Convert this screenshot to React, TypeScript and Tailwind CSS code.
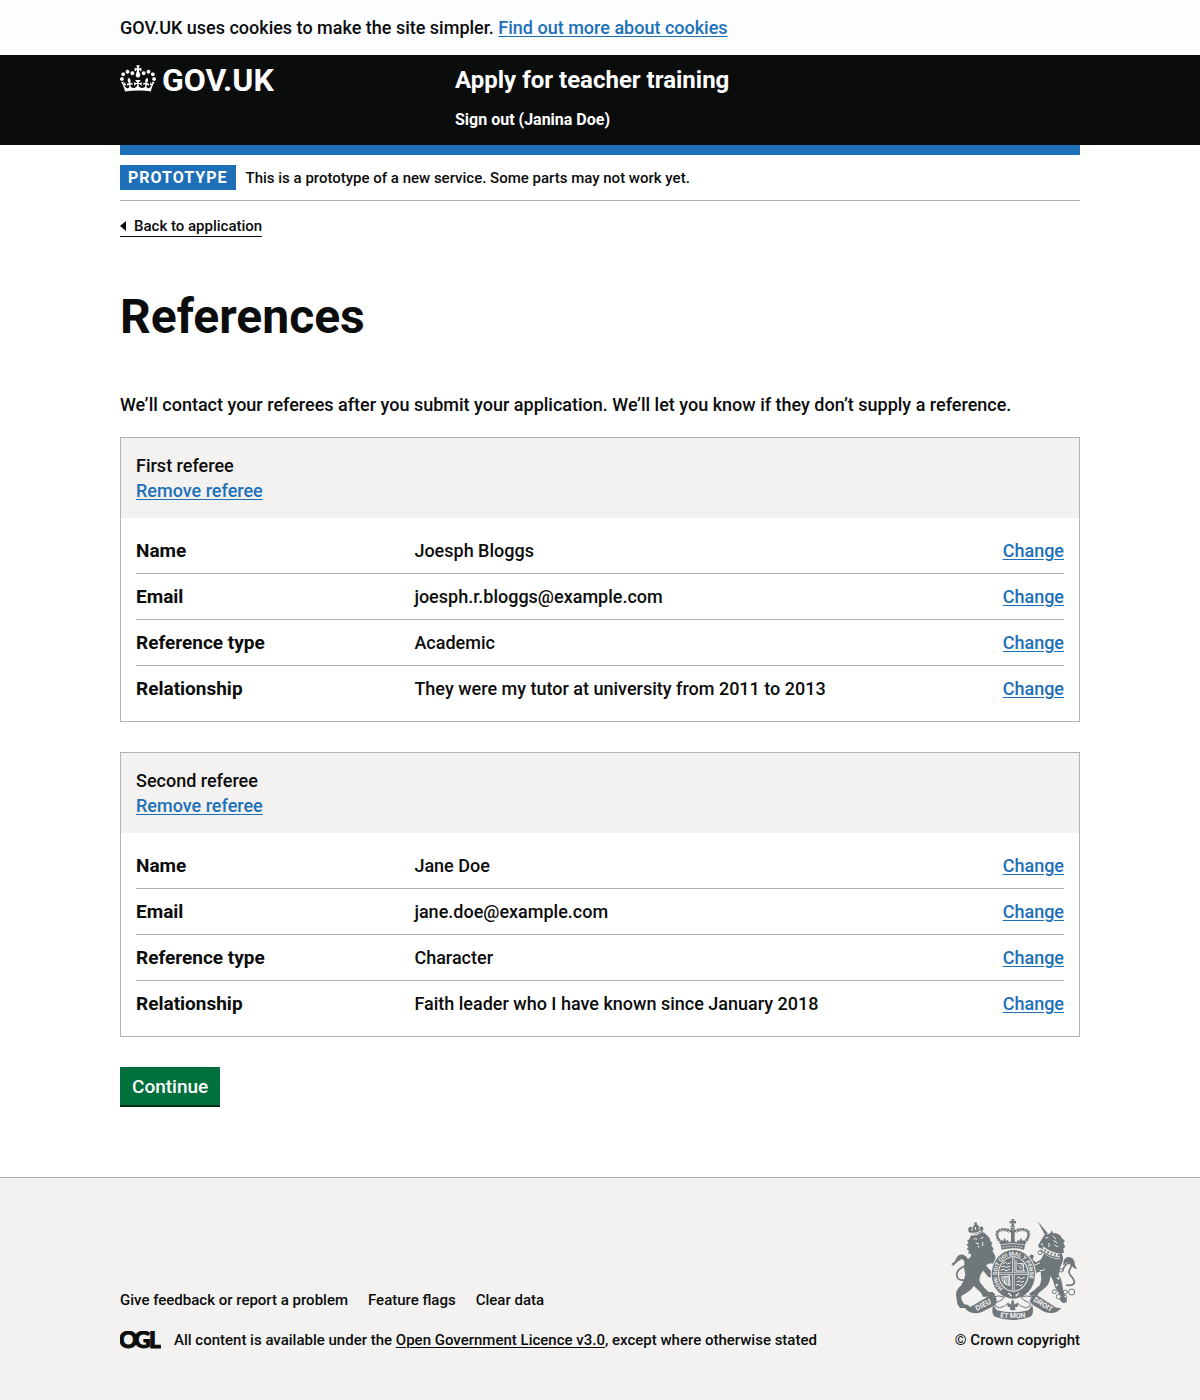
import type { ReactNode } from "react";

const INK = "#6f777b";
const PAPER = "#f3f2f1";

const linkClass = "text-[#1d70b8] underline underline-offset-2 hover:text-[#003078]";

function Container({ children }: { children: ReactNode }) {
  return <div className="mx-auto w-full max-w-[1020px] px-[30px]">{children}</div>;
}

function Crown() {
  return (
    <svg aria-hidden="true" viewBox="0 0 132 97" className="h-[27px] w-9 shrink-0 fill-current">
      <path d="M25 30.2c3.5 1.5 7.7-.2 9.1-3.7 1.5-3.6-.2-7.8-3.9-9.2-3.6-1.4-7.6.3-9.1 3.9-1.4 3.5.3 7.5 3.9 9zM9 39.5c3.6 1.5 7.8-.2 9.2-3.7 1.5-3.6-.2-7.8-3.9-9.1-3.6-1.5-7.6.2-9.1 3.8-1.4 3.5.3 7.5 3.8 9zM4.4 57.2c3.5 1.5 7.7-.2 9.1-3.8 1.5-3.6-.2-7.7-3.9-9.1-3.5-1.5-7.6.3-9.1 3.8-1.4 3.5.3 7.6 3.9 9.1zm38.3-21.4c3.5 1.5 7.7-.2 9.1-3.8 1.5-3.6-.2-7.7-3.9-9.1-3.6-1.5-7.6.3-9.1 3.8-1.3 3.6.4 7.7 3.9 9.1zm64.4-5.6c-3.6 1.5-7.8-.2-9.1-3.7-1.5-3.6.2-7.8 3.8-9.2 3.6-1.4 7.7.3 9.2 3.9 1.3 3.5-.4 7.5-3.9 9zm15.9 9.3c-3.6 1.5-7.7-.2-9.1-3.7-1.5-3.6.2-7.8 3.7-9.1 3.6-1.5 7.7.2 9.2 3.8 1.5 3.5-.3 7.5-3.8 9zm4.7 17.7c-3.6 1.5-7.8-.2-9.2-3.8-1.5-3.6.2-7.7 3.9-9.1 3.6-1.5 7.7.3 9.2 3.8 1.3 3.5-.4 7.6-3.9 9.1zM89.3 35.8c-3.6 1.5-7.8-.2-9.2-3.8-1.4-3.6.2-7.7 3.9-9.1 3.6-1.5 7.7.3 9.2 3.8 1.4 3.6-.3 7.7-3.9 9.1zM69.7 17.7l8.9 4.7V9.3l-8.9 2.8c-.2-.3-.5-.6-.9-.9L72.4 0H59.6l3.5 11.2c-.3.3-.6.5-.9.9l-8.8-2.8v13.1l8.8-4.7c.3.3.6.7.9.9l-5 15.4v.1c-.2.8-.4 1.6-.4 2.4 0 4.1 3.1 7.5 7 8.1h.2c.3 0 .7.1 1 .1.4 0 .7 0 1-.1h.2c4-.6 7.1-4.1 7.1-8.1 0-.8-.1-1.7-.4-2.4V34l-5.1-15.4c.4-.2.7-.6 1-.9zM66 92.8c16.9 0 32.8 1.1 47.1 3.2 4-16.9 8.9-26.7 14-33.5l-9.6-3.4c1 4.9 1.1 7.2 0 10.2-1.5-1.4-3-4.3-4.2-8.7L108.6 76c2.8-2 5-3.2 7.5-3.3-4.4 9.4-10 11.9-13.6 11.2-4.3-.8-6.3-4.6-5.6-7.9 1-4.7 5.7-5.9 8-.5 4.3-8.7-3-11.4-7.6-8.8 7.1-7.2 7.9-13.5 2.1-21.1-8 6.1-8.1 12.3-4.5 20.8-4.7-5.4-12.1-2.5-9.5 6.2 3.4-5.2 7.9-2 7.2 3.1-.6 4.3-6.4 7.8-13.5 7.2-10.3-.9-10.9-8-11.2-13.8 2.5-.5 7.1 1.8 11 7.3L80.2 60c-4.1 4.4-8 5.3-12.3 5.4 1.4-4.4 8-11.6 8-11.6H55.5s6.4 7.2 7.9 11.6c-4.2-.1-8-1-12.3-5.4l1.4 16.4c3.9-5.5 8.5-7.7 10.9-7.3-.3 5.8-.9 12.8-11.1 13.8-7.2.6-12.9-2.9-13.5-7.2-.7-5 3.8-8.3 7.1-3.1 2.7-8.7-4.6-11.6-9.4-6.2 3.7-8.5 3.6-14.7-4.6-20.8-5.8 7.6-5 13.9 2.2 21.1-4.7-2.6-11.9.1-7.7 8.8 2.3-5.5 7.1-4.2 8.1.5.7 3.3-1.3 7.1-5.7 7.9-3.5.7-9-1.8-13.5-11.2 2.5.1 4.7 1.3 7.5 3.3l-4.7-15.4c-1.2 4.4-2.7 7.2-4.3 8.7-1.1-3-.9-5.3 0-10.2l-9.5 3.4c5 6.9 9.9 16.7 14 33.5 14.8-2.1 30.8-3.2 47.7-3.2z" />
    </svg>
  );
}

function LicenceLogo() {
  return (
    <svg aria-hidden="true" viewBox="0 0 41 18" className="h-[18px] w-[41px] shrink-0 fill-current" fontFamily="Lato, sans-serif" fontWeight="900" fontSize="23" stroke="currentColor" strokeWidth="1">
      <text x="-1" y="17">O</text>
      <text x="14" y="17">G</text>
      <text x="29" y="17">L</text>
    </svg>
  );
}

function RoyalArms() {
  return (
    <svg aria-hidden="true" viewBox="0 0 393 312" className="h-[104px] w-[131px]" fill={INK} fontFamily="Roboto, sans-serif" fontWeight="700">
      {/* Lion */}
      <path d="M59 41q-4-10 3-14q8-2 9 6q1-12 10-14q9 0 9 12q4-8 11-4q5 6-1 14l-20 8q-12 0-21-8z" />
      <circle cx="80" cy="17" r="4" />
      <path d="M64 46q18 2 34-8" stroke={PAPER} strokeWidth="3" fill="none" />
      <path d="M68 33l2 4M79 27l1 8M91 31l-1 4" stroke={PAPER} strokeWidth="4" fill="none" />
      <path d="M66 52q18 2 34-10q8 2 14 10q8 6 10 16l6 8-3 6 7 12-4 4 8 14 3 16-4 10-14-2-12 6q10 14 22 22l6 10-8 6-14-4-14-18q-8 8-10 18q-4 12 2 20q10 14 24 26l12 0 8 8-4 6-34 0q-2-12-14-20l-12-12q-10 14-22 20l-16 10 0 10 8 14 14 4 4 8-30 0-8-12-4-28q0-16 14-26q10-14 14-34l-4-20q0-16 12-26l10-10-4-8-6 2 3-10-7-4 6-8-7-6 7-5-5-7 7-4z" />
      <path d="M74 64q6-4 10 0M95 61l8-3M80 75l10 3M87 83l2 6M100 72q4 6 0 12" stroke={PAPER} strokeWidth="3" fill="none" />
      <path d="M50 186q-28 3-27-17q2-14 18-22q18-10 13-24q-12-14-28 0q-8 14-18 16" stroke={INK} strokeWidth="5" fill="none" />
      <path d="M10 146q5-10 11-22q4-16 22-14q16 6 11 20q-4 8-8 10q2-16-10-16q-14 8-26 22z" />

      {/* Imperial crown */}
      <path d="M187 3h9l-2 7 7-2v9l-7-2 2 8h-9l2-8-7 2v-9l7 2z" />
      <circle cx="191" cy="29" r="7" />
      <path d="M184 28h15" stroke={PAPER} strokeWidth="2" />
      <path d="M155 73q-16-18-10-32q14-14 40-2M228 73q16-18 10-32q-14-14-40-2" stroke={INK} strokeWidth="8" strokeLinecap="round" strokeDasharray="0.1 8.5" fill="none" />
      <path d="M157 71q-14-16-9-28q12-10 34 0M226 71q14-16 9-28q-12-10-34 0" stroke={INK} strokeWidth="2" fill="none" />
      <path d="M186 37h11v38h-11z" />
      <path d="M154 77l3-12 6 4 3-10 6 10 5-4 2 8 6-2 6-16 7 16 6 2 2-8 5 4 5-10 4 10 6-4 3 12-4 18q-34-9-67 0z" />
      <path d="M156 80q35-7 71 0" stroke={PAPER} strokeWidth="2" fill="none" />
      <path d="M161 88q31-6 61 0" stroke={PAPER} strokeWidth="3" fill="none" strokeDasharray="5 4" />

      {/* Unicorn */}
      <path d="M266 10l30 36-7 7z" />
      <path d="M286 52l18-6 4-9 4 8q20 0 26 14l10 10-5 6 6 12-6 4 2 14-8 0q8 12 4 26l-8 18q-2 10-4 22q8 12 10 24l4 24q4 12 10 20l0 14-12 2-8-8-2-18-12-20-8-24-8-12q2 20-12 34l-22 18-4 8-22 0-2-6 14-10 18-16 4-18-2-22-10 2-12 12-8-8 8-12 0-10-12-8-6-18 12-10 8 4-4 12 10 8 14-8 8-14 6-22-10 2-8-2-4-6 8-14z" />
      <path d="M276 92q28 20 56 24" stroke={PAPER} strokeWidth="17" fill="none" />
      <path d="M277 88q24 22 56 24" stroke={INK} strokeWidth="6" strokeDasharray="6 5" fill="none" />
      <path d="M274 96q24 20 56 24" stroke={INK} strokeWidth="4" fill="none" />
      <path d="M289 61q4-4 9-2M311 53l10 10M313 67l12 8M317 81l10 6M275 78l8 1M299 75q4 6 0 12" stroke={PAPER} strokeWidth="3" fill="none" />
      <path d="M257 142l16-8M272 158q10 2 16-6" stroke={PAPER} strokeWidth="3" fill="none" />
      <path d="M341 160q4-20 18-25q12 2 6 14q-10 14 0 24q14 14 10 24q-8 8-24 4" stroke={INK} strokeWidth="5" fill="none" />
      <path d="M343 143q-2-22 14-26q20 0 20 20q2 8 7 16q-14-2-18-14q-8-14-23 4z" />
      <g fill={PAPER} stroke={INK} strokeWidth="3">
        <circle cx="273" cy="104" r="6" />
        <circle cx="336" cy="157" r="5" />
        <circle cx="328" cy="181" r="5" />
        <circle cx="323" cy="201" r="5" />
        <circle cx="316" cy="221" r="6" />
        <circle cx="329" cy="236" r="7" />
        <circle cx="349" cy="222" r="6" />
        <circle cx="349" cy="236" r="4" />
        <circle cx="368" cy="222" r="9" />
      </g>

      {/* Garter and shield */}
      <ellipse cx="193" cy="169" rx="68" ry="76" fill={PAPER} />
      <ellipse cx="193" cy="169" rx="65" ry="73" />
      <ellipse cx="193" cy="168" rx="46" ry="53" fill={PAPER} />
      <ellipse cx="193" cy="168" rx="43" ry="50" />
      <path id="garter-line" d="M162 212A49 56 0 1 1 224 212" fill="none" />
      <text fontSize="17" fill={PAPER}>
        <textPath href="#garter-line">HONI SOIT QUI MAL Y PENSE</textPath>
      </text>
      <path d="M193 119v98M150 167h86" stroke={PAPER} strokeWidth="7" />
      <path d="M193 119v98M150 167h86" stroke={INK} strokeWidth="3" />
      <g stroke={PAPER} strokeWidth="3" fill="none">
        <path d="M163 137l6-4 6 5 10-4M157 147l8-3 6 4 12-3M155 157l8-3 8 4 12-4" />
        <path d="M201 127v32h28M205 137h18v20M209 143l8 10M217 139l6 8" />
        <path d="M157 177q18 0 24-4l2 30q-16-4-20-10zM165 177l2 20M171 176v24M177 175l1 26" />
        <path d="M203 181l6-4 6 5 12-4M203 192l8-3 6 4 8-3M201 202l6-3 6 4 8-4" />
      </g>
      <path d="M178 225l10 10M210 225l-10 10" stroke={PAPER} strokeWidth="4" />

      {/* Motto scroll */}
      <path d="M128 238q22-8 38-1q-4 10-22 16q-8 4-6 11l14 6q16-4 26-16M254 238q-22-8-38-1q4 10 22 16q8 4 6 11l-14 6q-16-4-26-16" fill={PAPER} stroke={INK} strokeWidth="3" />
      <path d="M45 266q14 6 28-4l52-31 14 4 5 14q-4 12-16 18l-28 14q-36 14-55-15z" />
      <path d="M337 269q-14 4-24-6l-50-32-14 4-7 14q4 10 16 16l28 16q34 12 51-12z" />
      <path d="M132 262l12 15q47 12 94 0l12-15q6 26-6 34q-54 20-106 0q-12-8-6-34z" />
      <text fontSize="23" fill={PAPER} textAnchor="middle" transform="translate(106 267) rotate(-28)">DIEU</text>
      <text fontSize="22" fill={PAPER} textAnchor="middle" transform="translate(279 266) rotate(32)">DROIT</text>
      <path id="scroll-line" d="M138 295q54 12 107 0" fill="none" />
      <text fontSize="21" fill={PAPER} textAnchor="middle">
        <textPath href="#scroll-line" startOffset="50%">ET MON</textPath>
      </text>
      <path d="M191 244q8 10 2 20q4-9 11-8q6 3 1 11h-7q2 8 0 10h-14q-2-4 0-10h-7q-5-8 1-11q7-1 11 8q-6-10 2-20z" />
    </svg>
  );
}

type Row = { label: string; value: string };

function RefereeCard({ title, rows }: { title: string; rows: Row[] }) {
  return (
    <section className="mb-[30px] border border-[#b1b4b6]">
      <header className="bg-[#f3f2f1] p-[15px]">
        <h2>{title}</h2>
        <a href="#remove" className={linkClass}>Remove referee</a>
      </header>
      <dl className="px-[15px] py-2.5">
        {rows.map((row) => (
          <div key={row.label} className="flex border-b border-[#b1b4b6] py-2.5 last:border-b-0">
            <dt className="w-[30%] shrink-0 text-[19px] font-bold">{row.label}</dt>
            <dd className="flex-1">{row.value}</dd>
            <dd>
              <a href="#change" aria-label={`Change ${row.label.toLowerCase()}`} className={linkClass}>Change</a>
            </dd>
          </div>
        ))}
      </dl>
    </section>
  );
}

export default function App() {
  return (
    <div className="bg-white font-['Roboto','Liberation_Sans',sans-serif] text-lg leading-[25px] font-medium text-[#0b0c0c]">
      <div className="bg-[#fcfdfe] py-[15px]">
        <Container>
          <p>
            GOV.UK uses cookies to make the site simpler.{" "}
            <a href="#cookies" className={linkClass}>Find out more about cookies</a>
          </p>
        </Container>
      </div>

      <header className="bg-[#0b0c0c] text-white">
        <Container>
          <div className="flex pt-2.5 pb-[15px]">
            <a href="#home" className="flex w-[335px] shrink-0 gap-1.5 text-[32px] leading-[30px] font-bold">
              <Crown />
              <span>GOV.UK</span>
            </a>
            <div>
              <a href="#service" className="block text-2xl leading-[30px] font-bold">Apply for teacher training</a>
              <nav className="mt-[15px] text-base leading-5 font-bold">
                <a href="#sign-out" className="block">Sign out (Janina Doe)</a>
              </nav>
            </div>
          </div>
        </Container>
      </header>

      <Container>
        <div className="h-2.5 bg-[#1d70b8]" />
        <div className="flex items-center gap-2.5 border-b border-[#b1b4b6] py-2.5">
          <strong className="bg-[#1d70b8] px-2 text-base leading-[25px] font-bold tracking-[1px] text-white uppercase">Prototype</strong>
          <span className="text-[15px] leading-5">This is a prototype of a new service. Some parts may not work yet.</span>
        </div>
        <a href="#application" className="mt-[15px] inline-flex items-center gap-2 border-b border-[#0b0c0c] text-[15px] leading-5">
          <svg aria-hidden="true" viewBox="0 0 6 10" className="h-2.5 w-1.5 fill-current">
            <path d="M6 0v10L0 5z" />
          </svg>
          Back to application
        </a>

        <main className="pt-[55px] pb-[70px]">
          <h1 className="mb-[50px] text-5xl leading-[50px] font-bold">References</h1>
          <p className="mb-5">We’ll contact your referees after you submit your application. We’ll let you know if they don’t supply a reference.</p>

          <RefereeCard
            title="First referee"
            rows={[
              { label: "Name", value: "Joesph Bloggs" },
              { label: "Email", value: "joesph.r.bloggs@example.com" },
              { label: "Reference type", value: "Academic" },
              { label: "Relationship", value: "They were my tutor at university from 2011 to 2013" },
            ]}
          />
          <RefereeCard
            title="Second referee"
            rows={[
              { label: "Name", value: "Jane Doe" },
              { label: "Email", value: "jane.doe@example.com" },
              { label: "Reference type", value: "Character" },
              { label: "Relationship", value: "Faith leader who I have known since January 2018" },
            ]}
          />

          <button type="button" className="block border-b-2 border-[#002d18] bg-[#00703c] px-3 pt-[7px] pb-1.5 text-[19px] text-white">Continue</button>
        </main>
      </Container>

      <footer className="border-t border-[#b1b4b6] bg-[#f3f2f1] pt-10 pb-[50px] text-[15px] leading-5">
        <Container>
          <div className="flex items-end justify-between">
            <div>
              <ul className="mb-5 flex gap-5">
                <li><a href="#feedback">Give feedback or report a problem</a></li>
                <li><a href="#flags">Feature flags</a></li>
                <li><a href="#clear">Clear data</a></li>
              </ul>
              <div className="flex items-center gap-[13px]">
                <LicenceLogo />
                <span>
                  All content is available under the{" "}
                  <a href="#licence" className="underline underline-offset-2">Open Government Licence v3.0</a>, except where otherwise stated
                </span>
              </div>
            </div>
            <a href="#copyright" className="flex flex-col items-end gap-2">
              <RoyalArms />
              <span>© Crown copyright</span>
            </a>
          </div>
        </Container>
      </footer>
    </div>
  );
}
